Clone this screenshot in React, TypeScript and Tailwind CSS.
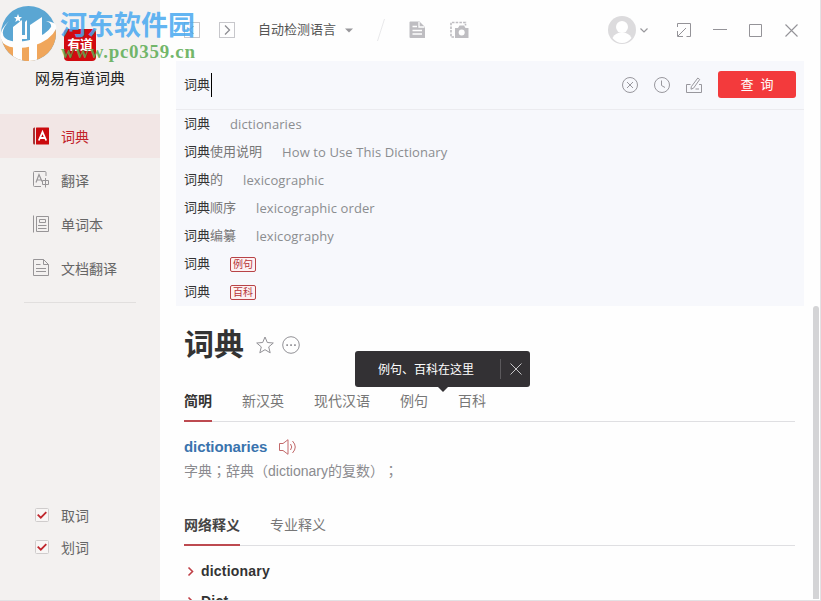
import type { ReactNode } from "react";

// ─── Data ─────────────────────────────────────────────────────────────────────

const suggestions = [
  { rest: "", meaning: "dictionaries" },
  { rest: "使用说明", meaning: "How to Use This Dictionary" },
  { rest: "的", meaning: "lexicographic" },
  { rest: "顺序", meaning: "lexicographic order" },
  { rest: "编纂", meaning: "lexicography" },
  { rest: "", tag: "例句" },
  { rest: "", tag: "百科" },
];

const tabs = ["简明", "新汉英", "现代汉语", "例句", "百科"];

// ─── Page ─────────────────────────────────────────────────────────────────────

export default function App() {
  return (
    <div className="relative flex h-[601px] w-[821px] flex-col overflow-hidden border-r border-b border-[#e2e1e4] bg-[#fefefe] font-['Liberation_Sans','Noto_Sans_CJK_SC',sans-serif] text-sm text-[#666]">
      <div className="flex min-h-0 flex-1">
        <Sidebar />
        <main className="flex min-w-0 flex-1 flex-col pl-4">
          <TitleBar />
          <SearchPanel />
          <div className="flex min-h-0 flex-1 justify-between">
            <Result />
            <div className="mr-px mb-px w-1.5 rounded-t-full bg-[#d4d4d6]" />
          </div>
        </main>
      </div>
      <Watermark />
    </div>
  );
}

// ─── Sidebar ──────────────────────────────────────────────────────────────────

function Sidebar() {
  return (
    <aside className="flex w-40 shrink-0 flex-col bg-[#f3f1f0]">
      <div className="flex h-[114px] flex-col items-center pt-[29px]">
        <div className="flex h-8 w-8 items-center justify-center rounded bg-[#d10a10] text-[13px] font-bold tracking-[-0.5px] text-white">
          有道
        </div>
        <div className="mt-[7px] text-[15px] leading-[22px] text-[#222]">网易有道词典</div>
      </div>

      <NavItem label="词典" active icon={<BookIcon />} />
      <NavItem label="翻译" icon={<TranslateIcon />} />
      <NavItem label="单词本" icon={<NotebookIcon />} />
      <NavItem label="文档翻译" icon={<FileIcon />} />
      <div className="mx-6 mt-3 border-t border-[#e1dfde]" />

      <div className="mt-auto mb-[43px] flex flex-col gap-3 pl-[35px]">
        <CheckRow label="取词" />
        <CheckRow label="划词" />
      </div>
    </aside>
  );
}

function NavItem({ label, icon, active }: { label: string; icon: ReactNode; active?: boolean }) {
  return (
    <div
      className={
        active
          ? "flex h-11 items-center gap-3 bg-[#f2e6e5] pl-[33px] text-[#c22229]"
          : "flex h-11 items-center gap-3 pl-[33px] text-[#666]"
      }
    >
      {icon}
      <span className="pt-0.5 leading-5">{label}</span>
    </div>
  );
}

function CheckRow({ label }: { label: string }) {
  return (
    <div className="flex h-5 items-center gap-3">
      <svg width="14" height="14" viewBox="0 0 14 14" fill="none">
        <rect x="0.5" y="0.5" width="13" height="13" rx="1" fill="#f8f6f5" stroke="#cfcccc" />
        <path d="M2.7 6.7 5.8 9.7 11.3 4.2" stroke="#c0272d" strokeWidth="1.8" />
      </svg>
      <span className="pt-px leading-5">{label}</span>
    </div>
  );
}

function BookIcon() {
  return (
    <svg width="16" height="18" viewBox="0 0 16 18">
      <path d="M1.5 0.5H2V17.5H1.5Q0 17.5 0 16V2Q0 0.5 1.5 0.5Z" fill="#a93335" />
      <rect x="3" y="0.5" width="13" height="17" rx="0.5" fill="#cb0a0e" />
      <path d="M5.8 13.5 9.5 5 13.2 13.5M7 11H12" fill="none" stroke="#fff" strokeWidth="1.8" />
    </svg>
  );
}

function TranslateIcon() {
  return (
    <svg className="-mt-0.5" width="16" height="18" viewBox="0 0 16 18" fill="none" stroke="#979597">
      <path d="M13 6V2.5Q13 1.5 12 1.5H1.5Q0.5 1.5 0.5 2.5V15.5Q0.5 16.5 1.5 16.5H8" />
      <path d="M3 12.5 6 4.5 9 11.5M4 10H8" strokeWidth="1.2" />
      <path d="M9.5 10.5H15.5V14.5H9.5ZM12.5 8V17.5" />
    </svg>
  );
}

function NotebookIcon() {
  return (
    <svg className="-mt-px" width="16" height="18" viewBox="0 0 16 18" fill="none" stroke="#979597">
      <path d="M0.5 0.5V17.5M3.5 1.5H15.5V16.5H3.5Z" />
      <path d="M6.5 4.5H12.5V7.5H6.5ZM5 10.5H13.5M5 13.5H13.5" />
    </svg>
  );
}

function FileIcon() {
  return (
    <svg className="-mt-0.5" width="16" height="18" viewBox="0 0 16 18" fill="none" stroke="#979597">
      <path d="M10.5 1.5H0.5V17.5H15.5V6.5L10.5 1.5V6.5H15.5" />
      <path d="M3 6.5H7.5M3 10.5H13M3 13.5H13" />
    </svg>
  );
}

// ─── Title bar ────────────────────────────────────────────────────────────────

function TitleBar() {
  return (
    <header className="flex h-[61px] shrink-0 items-center pb-px pl-2">
      <svg width="16" height="16" viewBox="0 0 16 16" fill="none">
        <rect x="0.5" y="0.5" width="15" height="15" stroke="#c7c7cb" />
        <path d="M9.5 4 5.5 8 9.5 12" stroke="#8e8e93" />
      </svg>
      <svg className="ml-[19px]" width="16" height="16" viewBox="0 0 16 16" fill="none">
        <rect x="0.5" y="0.5" width="15" height="15" stroke="#c7c7cb" />
        <path d="M6 3.5 10.5 8 6 12.5" stroke="#8e8e93" strokeWidth="1.3" />
      </svg>
      <span className="ml-[23px] text-[13px] text-[#555]">自动检测语言</span>
      <svg className="ml-[9px]" width="8" height="5" viewBox="0 0 8 5">
        <path d="M0 0.5H8L4 4.5Z" fill="#98979b" />
      </svg>
      <svg className="ml-6" width="8" height="22" viewBox="0 0 8 22">
        <path d="M7.5 0 0.5 22" stroke="#e8e8ea" />
      </svg>
      <svg className="ml-6" width="17" height="18" viewBox="0 0 17 18">
        <path d="M1.5 0.5H10.5L16 6V17H1.5Q0.5 17 0.5 16V1.5Q0.5 0.5 1.5 0.5Z" fill="#bebdc1" />
        <path d="M3.5 5.5H8M3.5 9.5H13M3.5 13H13M10 1V6H15.5" fill="none" stroke="#fefefe" strokeWidth="1.3" />
      </svg>
      <svg className="ml-6" width="19" height="18" viewBox="0 0 19 18">
        <path d="M4 16H1V1.5H15.5V4.5" fill="none" stroke="#bebdc1" strokeWidth="1.6" strokeDasharray="2.5 1.2" />
        <path d="M5 7H8L9.5 4.5H14L15.5 7H18.5V17H5Z" fill="#bebdc1" />
        <circle cx="11.7" cy="11.5" r="3" fill="#fefefe" />
      </svg>

      <div className="ml-auto flex items-center pr-[22px]">
        <svg width="28" height="28" viewBox="0 0 28 28">
          <circle cx="14" cy="14" r="14" fill="#dcdbdd" />
          <circle cx="14" cy="11" r="6" fill="#fff" />
          <path d="M4.5 22Q7 16.5 14 16.5T23.5 22Q19.5 27 14 27T4.5 22Z" fill="#fff" />
        </svg>
        <svg className="ml-1" width="8" height="5" viewBox="0 0 8 5" fill="none">
          <path d="M0.5 0.5 4 4 7.5 0.5" stroke="#99989c" strokeWidth="1.2" />
        </svg>
        <svg className="ml-[29px]" width="14" height="14" viewBox="0 0 14 14" fill="none" stroke="#949398">
          <path d="M0.5 4V0.5H13.5V13.5H9.5M9 5 1 13M0.5 8V13.5H6" />
        </svg>
        <svg className="ml-[22px]" width="14" height="14" viewBox="0 0 14 14">
          <path d="M0 6.5H14" stroke="#949398" />
        </svg>
        <svg className="ml-[22px]" width="13" height="14" viewBox="0 0 13 14" fill="none">
          <path d="M0.5 1.5H12.5V13.5H0.5Z" stroke="#949398" />
        </svg>
        <svg className="ml-[23px]" width="13" height="13" viewBox="0 0 13 13">
          <path d="M0.5 0.5 12.5 12.5M12.5 0.5 0.5 12.5" stroke="#949398" strokeWidth="1.1" />
        </svg>
      </div>
    </header>
  );
}

// ─── Search ───────────────────────────────────────────────────────────────────

function SearchPanel() {
  return (
    <section className="h-[245px] w-[628px] shrink-0 bg-[#f7f8fc]">
      <div className="flex h-[49px] items-center border-b border-[#ebebef] pl-2">
        <span className="text-[13px] text-[#333]">词典</span>
        <span className="mb-px ml-px h-6 w-px bg-black" />
        <div className="ml-auto flex items-center gap-4 pr-2">
          <svg width="16" height="16" viewBox="0 0 16 16" fill="none" stroke="#98979d">
            <circle cx="8" cy="8" r="7.5" />
            <path d="M5 5 11 11M11 5 5 11" />
          </svg>
          <svg width="16" height="16" viewBox="0 0 16 16" fill="none" stroke="#98979d">
            <circle cx="8" cy="8" r="7.5" />
            <path d="M7.5 3.5V8.5L11 10.5" />
          </svg>
          <svg width="16" height="17" viewBox="0 0 16 17" fill="none" stroke="#98979d">
            <path d="M4.5 7.5H0.5V15.5H15.5V7.5H13M9.5 12H13" />
            <path d="M11.8 1 13.7 2.5 7.5 11.2 5 12.2 5.3 9.7Z" />
          </svg>
          <button className="mb-px flex h-[27px] w-[78px] items-center justify-center rounded-[3px] bg-[#f33a3c] pt-px text-[13px] whitespace-pre text-white">
            {"查  询"}
          </button>
        </div>
      </div>
      <ul className="pl-2 text-[13px]">
        {suggestions.map((item, i) => (
          <li key={i} className="flex h-7 items-center">
            <span className="text-[#333]">词典</span>
            <span className="text-[#777]">{item.rest}</span>
            {item.meaning && (
              <span className="ml-5 font-['Open_Sans','Noto_Sans',sans-serif] tracking-[0.1px] text-[#8b8d90]">
                {item.meaning}
              </span>
            )}
            {item.tag && (
              <span className="ml-5 flex h-[15px] w-[26px] items-center justify-center rounded-[2px] border border-[#b84347] bg-[#fdf1f2] pt-px text-[10px] leading-none text-[#b53439]">
                {item.tag}
              </span>
            )}
          </li>
        ))}
      </ul>
    </section>
  );
}

// ─── Result ───────────────────────────────────────────────────────────────────

function Result() {
  return (
    <section className="ml-2 w-[611px] overflow-hidden">
      <div className="flex h-[78px] items-center">
        <h1 className="text-[30px] leading-none font-bold text-[#333]">词典</h1>
        <svg className="ml-3" width="18" height="18" viewBox="0 0 18 18" fill="none" stroke="#929196">
          <path d="M9 1 11.3 6.5 17.3 7 12.7 10.9 14.2 16.8 9 13.7 3.8 16.8 5.3 10.9 0.7 7 6.7 6.5Z" />
        </svg>
        <svg className="ml-2" width="18" height="18" viewBox="0 0 18 18">
          <circle cx="9" cy="9" r="8.3" fill="none" stroke="#929196" />
          <path d="M4.3 8.3H6V10H4.3ZM8.2 8.3H9.9V10H8.2ZM12.1 8.3H13.8V10H12.1Z" fill="#929196" />
        </svg>
      </div>

      <div className="relative flex h-[38px] gap-[30px] border-b border-[#dfdfe2]">
        {tabs.map((tab, i) => (
          <div
            key={tab}
            className={
              i === 0
                ? "-mb-px h-[38px] border-b-2 border-[#bd4a50] pt-[7px] font-bold text-[#333]"
                : "pt-[7px] text-[#777]"
            }
          >
            {tab}
          </div>
        ))}
        <Tip />
      </div>

      <div className="mt-[13px] flex h-6 items-center">
        <span className="text-[15px] font-bold tracking-[-0.08px] text-[#3973ad]">dictionaries</span>
        <svg className="ml-3" width="18" height="16" viewBox="0 0 18 16" fill="none" stroke="#c2696a">
          <path d="M0.5 4.5H4L9 0.7V15.3L4 11.5H0.5Z" />
          <path d="M11.5 5Q14 8 11.5 11M13.5 2Q19 8 13.5 14" />
        </svg>
      </div>
      <p className="h-6 leading-[22px] text-[#8b8b8f] [text-spacing-trim:space-all]">
        字典<Semicolon />辞典（dictionary的复数）<Semicolon />
      </p>

      <div className="mt-[31px] flex h-[32px] gap-[30px] border-b border-[#dfdfe2]">
        <div className="-mb-px h-[32px] border-b-2 border-[#bd4a50] pt-px font-bold text-[#444]">网络释义</div>
        <div className="pt-px text-[#777]">专业释义</div>
      </div>

      <div className="mt-[15px] flex flex-col gap-[10px]">
        <MeaningRow word="dictionary" />
        <MeaningRow word="Dict" />
      </div>
    </section>
  );
}

// full-width semicolon, centred in its cell
function Semicolon() {
  return <span className="font-['Noto_Sans_CJK_TC',sans-serif]">；</span>;
}

function Tip() {
  return (
    <div className="absolute top-[-33px] left-[171px] flex h-9 w-[175px] items-center rounded-[3px] bg-[#333134] text-xs text-white">
      <span className="ml-[23px] w-[122px] pt-px">例句、百科在这里</span>
      <span className="h-5 w-px bg-[#5b595c]" />
      <svg className="ml-[9px]" width="12" height="12" viewBox="0 0 12 12">
        <path d="M0.5 0.5 11.5 11.5M11.5 0.5 0.5 11.5" stroke="#c6c5c7" />
      </svg>
      <svg className="absolute top-9 left-[83px]" width="10" height="5" viewBox="0 0 10 5">
        <path d="M0 0H10L5 5Z" fill="#333134" />
      </svg>
    </div>
  );
}

function MeaningRow({ word }: { word: string }) {
  return (
    <div className="flex h-5 items-center gap-[5px] pl-[3px] text-[#333]">
      <svg width="9" height="11" viewBox="0 0 9 11" fill="none">
        <path d="M1.5 1.5 5.5 5.5 1.5 9.5" stroke="#bf3f46" strokeWidth="1.6" />
      </svg>
      <span className="font-bold tracking-[0.2px]">{word}</span>
    </div>
  );
}

// ─── Watermark ────────────────────────────────────────────────────────────────

function Watermark() {
  return (
    <div className="pointer-events-none absolute top-0 left-0 h-[66px] w-[200px]">
      <svg className="absolute top-[5px] left-0" width="58" height="60" viewBox="0 0 58 60">
        <clipPath id="globe">
          <circle cx="28.5" cy="28.5" r="27.5" />
        </clipPath>
        <g clipPath="url(#globe)">
          <rect width="58" height="60" fill="#5aa6d3" />
          <path d="M0 32Q18 44 36 36Q50 30 58 19V60H0Z" fill="#f0a65b" />
          <path d="M13 22 22 15V57H13ZM25 17 27 15V34H22V30H25Z" fill="#fefefe" />
          <path d="M30 20 42 12V34H37V57H29V36H30Z" fill="#fefefe" />
          <path d="M22 39H29V57H24V44H22Z" fill="#f0a65b" />
        </g>
        <path
          d="M9 16Q-1 27 5 33Q14 40 33 34Q47 29 51 22Q52 18 46 16Q58 17 56 24Q51 35 33 41Q12 46 3 38Q-4 28 9 16Z"
          fill="#fefefe"
        />
        <path d="M18 9 19.2 12 22 12 19.8 14 20.7 17 18 15.2 15.3 17 16.2 14 14 12 16.8 12Z" fill="#fefefe" />
      </svg>
      <div className="absolute top-[7px] left-[60px] font-['Noto_Sans_CJK_SC',sans-serif] text-[27px] leading-[34px] font-bold whitespace-nowrap text-[#47a8f0]/85">
        河东软件园
      </div>
      <div className="absolute top-[40px] left-[61px] font-['Liberation_Serif',serif] text-[19px] leading-6 font-bold tracking-[0.7px] whitespace-nowrap text-[#5aaa50]/85">
        www.pc0359.cn
      </div>
    </div>
  );
}
